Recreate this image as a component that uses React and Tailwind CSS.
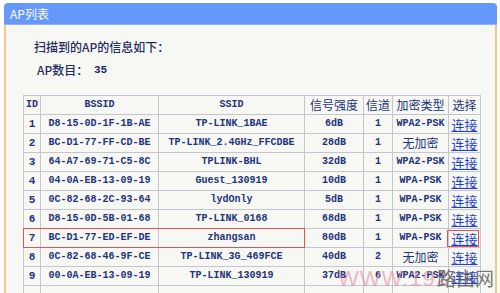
import React from 'react';

const rows = [
  ['1', 'D8-15-0D-1F-1B-AE', 'TP-LINK_1BAE', '6dB', '1', 'WPA2-PSK'],
  ['2', 'BC-D1-77-FF-CD-BE', 'TP-LINK_2.4GHz_FFCDBE', '28dB', '1', '无加密'],
  ['3', '64-A7-69-71-C5-8C', 'TPLINK-BHL', '32dB', '1', 'WPA2-PSK'],
  ['4', '04-0A-EB-13-09-19', 'Guest_130919', '10dB', '1', 'WPA-PSK'],
  ['5', '0C-82-68-2C-93-64', 'lydOnly', '5dB', '1', 'WPA-PSK'],
  ['6', 'D8-15-0D-5B-01-68', 'TP-LINK_0168', '68dB', '1', 'WPA-PSK'],
  ['7', 'BC-D1-77-ED-EF-DE', 'zhangsan', '80dB', '1', 'WPA-PSK'],
  ['8', '0C-82-68-46-9F-CE', 'TP-LINK_3G_469FCE', '40dB', '2', '无加密'],
  ['9', '00-0A-EB-13-09-19', 'TP-LINK_130919', '37dB', '6', 'WPA2-PSK'],
];

const cjk = { fontFamily: '"Noto Sans CJK SC", "Noto Sans", sans-serif' };
const mono = { fontFamily: '"Liberation Mono", "DejaVu Sans Mono", "Noto Sans CJK SC", monospace' };

function Cell({ children, cn = false, className = '' }) {
  return (
    <td
      style={cn ? cjk : mono}
      className={`h-[19px] p-0 text-center border border-[#c3c6cc] leading-none whitespace-nowrap ${cn ? 'text-[12px]' : 'text-[10px] font-bold'} ${className}`}
    >
      {children}
    </td>
  );
}

export default function App() {
  return (
    <div className="relative w-[500px] h-[293px] overflow-hidden bg-white pt-[3px] pl-[4px] pr-[3px]">
      <div className="h-[22px] bg-[#6598fb] rounded-t-[4px] flex items-center pl-[6px] text-white text-[12px] border-b border-[#8fb4fb]" style={cjk}>
        AP列表
      </div>
      <div className="h-[300px] bg-[#f7f7f3] border-l-2 border-r-2 border-[#f1c98c] text-[#1f2d63]">
        <div className="pt-[14px] pl-[28px] text-[12px] leading-[16px] font-medium" style={cjk}>
          扫描到的AP的信息如下：
        </div>
        <div className="mt-[7px] pl-[31px] text-[12px] leading-[16px] flex" style={cjk}>
          <span className="w-[57px] font-medium">AP数目：</span>
          <span style={mono} className="text-[11px] font-bold">35</span>
        </div>
        <div className="relative mt-[17px] ml-[17px] w-[457px]">
          <table className="w-[457px] border-collapse table-fixed text-[#23357a]">
            <colgroup>
              <col className="w-[17px]" />
              <col className="w-[118px]" />
              <col className="w-[146px]" />
              <col className="w-[59px]" />
              <col className="w-[29px]" />
              <col className="w-[56px]" />
              <col className="w-[32px]" />
            </colgroup>
            <thead>
              <tr>
                <Cell>ID</Cell>
                <Cell>BSSID</Cell>
                <Cell>SSID</Cell>
                <Cell cn>信号强度</Cell>
                <Cell cn>信道</Cell>
                <Cell cn>加密类型</Cell>
                <Cell cn>选择</Cell>
              </tr>
            </thead>
            <tbody>
              {rows.map((r) => (
                <tr key={r[0]}>
                  <Cell className="text-[11px]">{r[0]}</Cell>
                  <Cell>{r[1]}</Cell>
                  <Cell>{r[2]}</Cell>
                  <Cell>{r[3]}</Cell>
                  <Cell>{r[4]}</Cell>
                  {r[5] === '无加密' ? <Cell cn>{r[5]}</Cell> : <Cell>{r[5]}</Cell>}
                  <Cell cn>
                    <a className="text-[#1d3fd6] underline text-[13px]">连接</a>
                  </Cell>
                </tr>
              ))}
              <tr>
                <Cell>&nbsp;</Cell>
                <Cell>&nbsp;</Cell>
                <Cell>&nbsp;</Cell>
                <Cell>&nbsp;</Cell>
                <Cell>&nbsp;</Cell>
                <Cell>&nbsp;</Cell>
                <Cell>&nbsp;</Cell>
              </tr>
            </tbody>
          </table>
          <div className="absolute left-0 top-[133px] w-[282px] h-[20px] border border-[#e0525a]" />
          <div className="absolute left-[424px] top-[135px] w-[32px] h-[17px] border border-[#e0525a]" />
        </div>
      </div>
      <div className="absolute left-[338px] top-[268px] text-[22px] leading-none tracking-[1px] text-[#e48aa6]/60" style={{ fontFamily: '"Liberation Sans", sans-serif' }}>
        WWW.192
      </div>
      <div className="absolute left-[437px] top-[268px] text-[19px] leading-none text-[#555]/80" style={cjk}>
        路由网
      </div>
    </div>
  );
}
